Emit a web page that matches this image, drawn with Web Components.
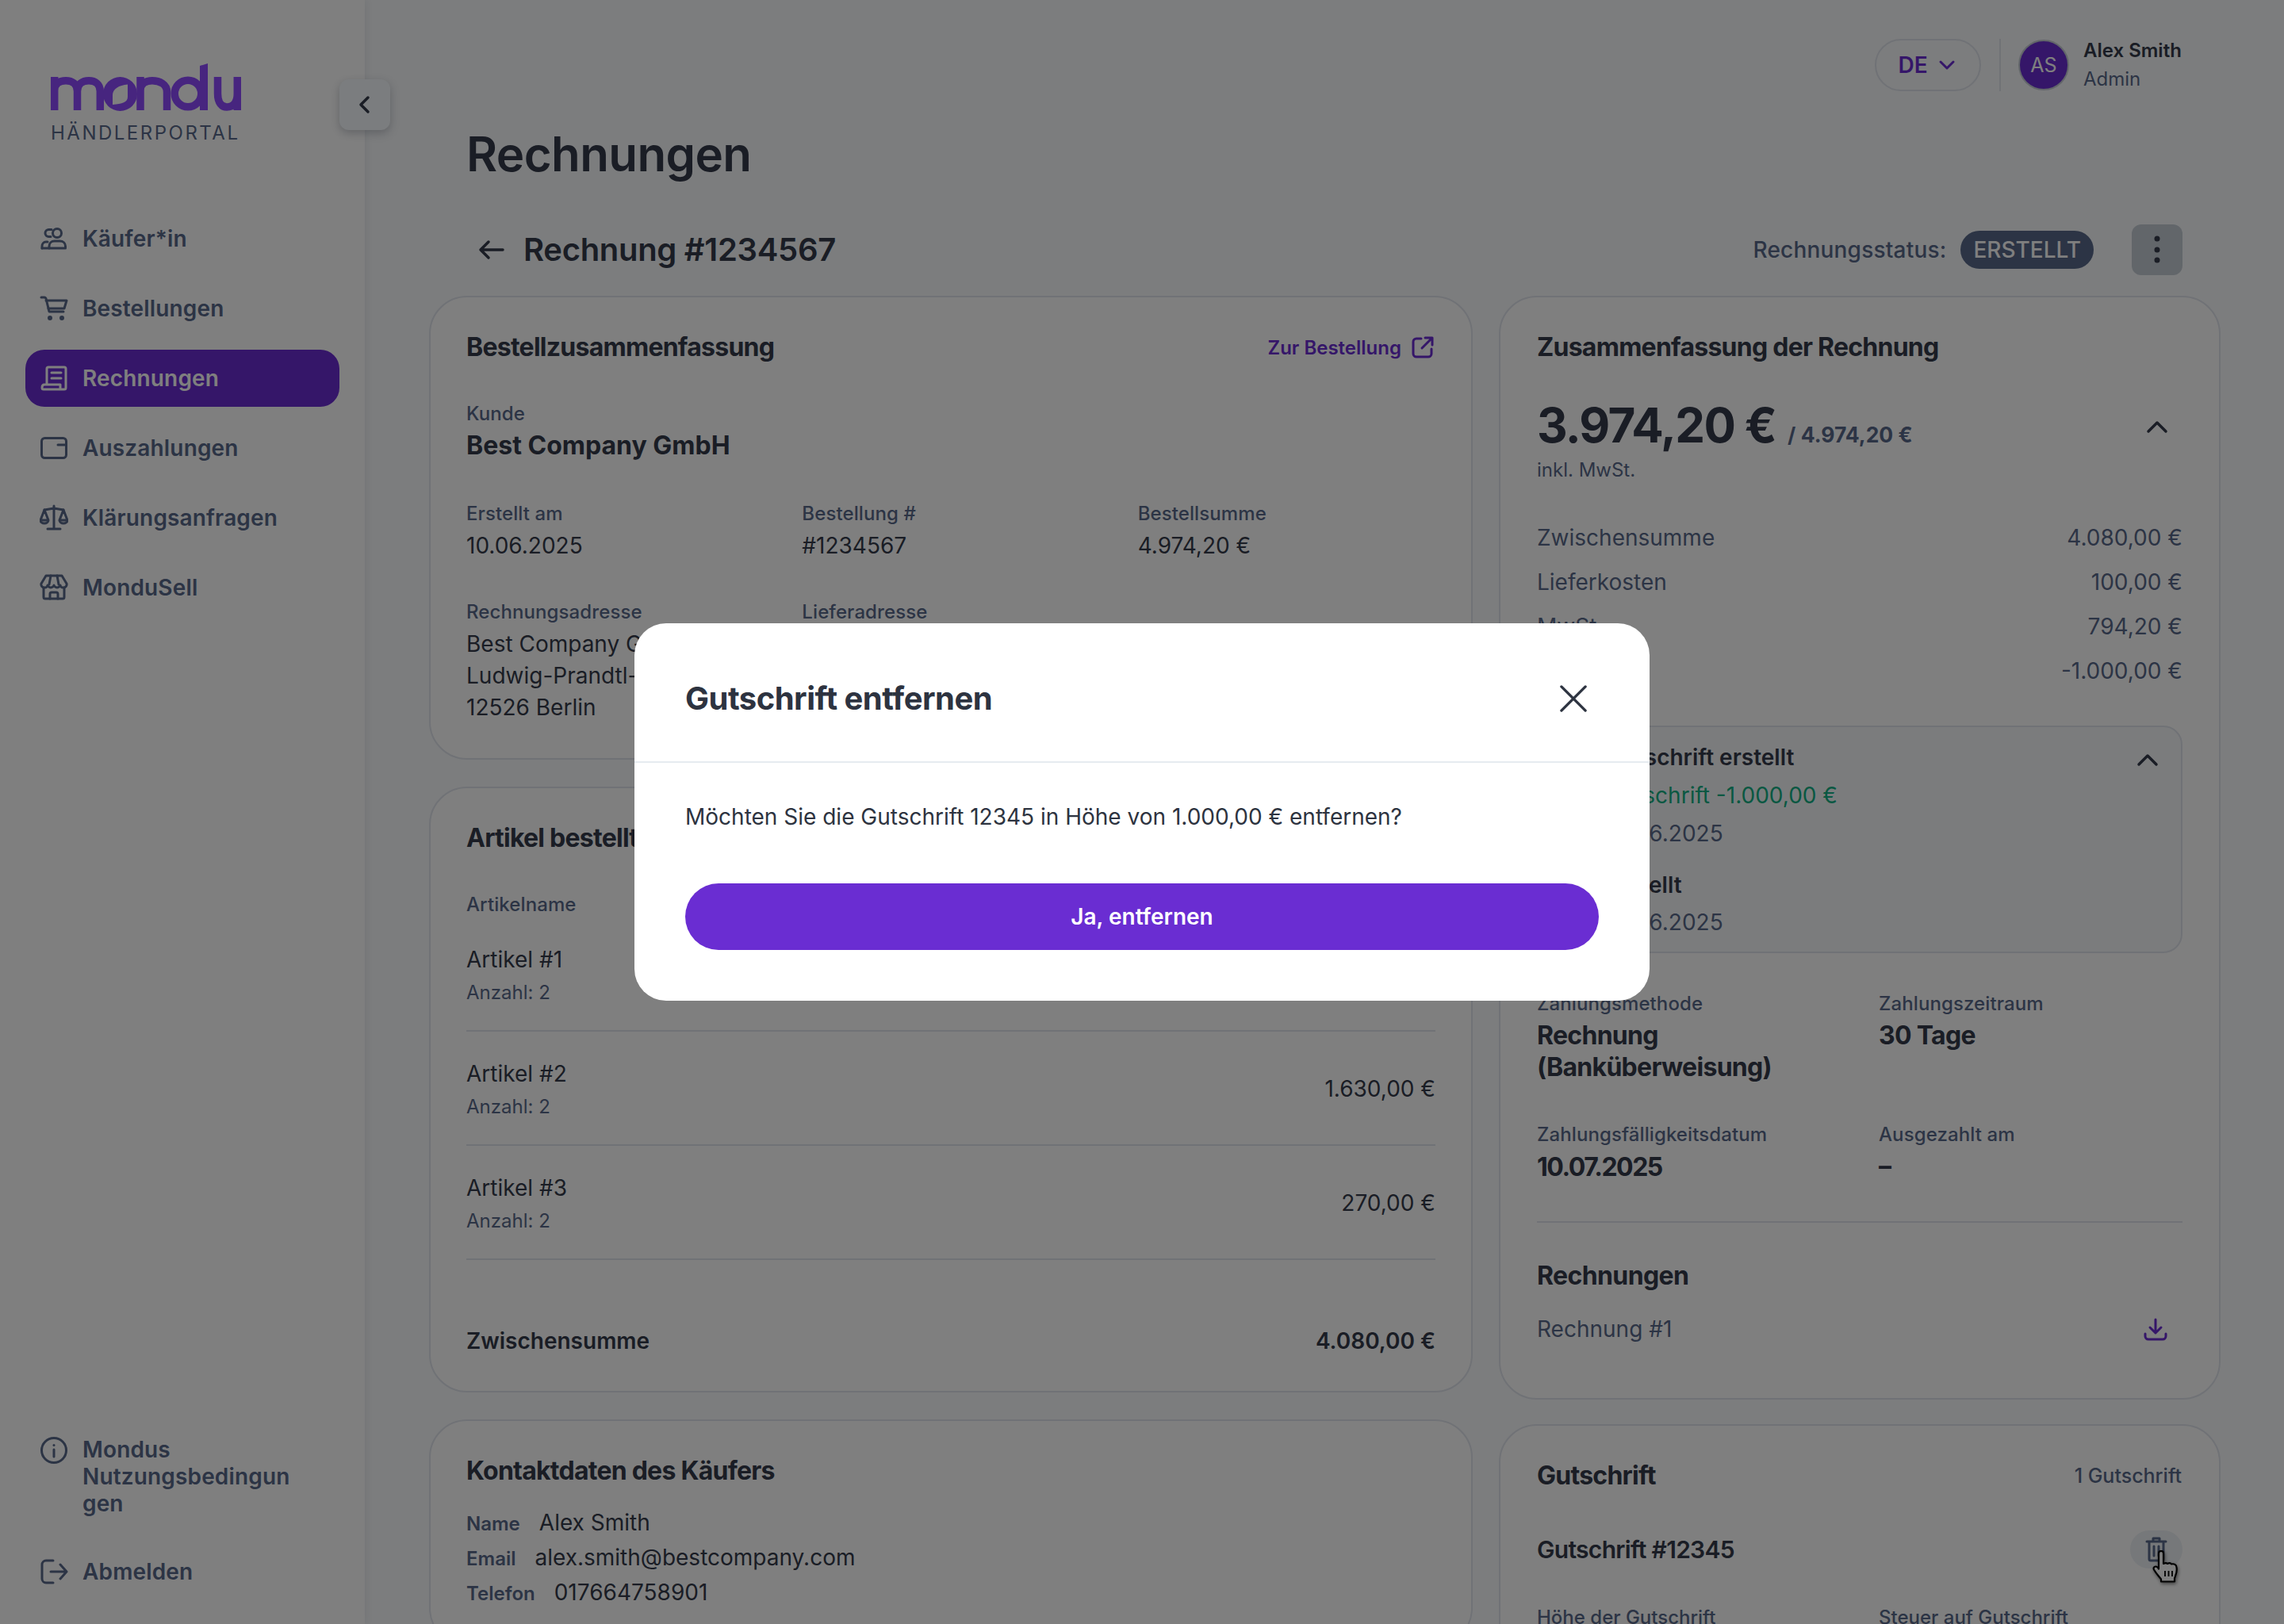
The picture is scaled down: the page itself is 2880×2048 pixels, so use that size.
<!DOCTYPE html>
<html lang="de">
<head>
<meta charset="utf-8">
<title>Rechnungen</title>
<style>
  html, body { margin: 0; height: 2048px; overflow: hidden; background: #f8fafc; }
  body { font-family: Inter, "Liberation Sans", sans-serif; color: #343a4a; }
</style>
</head>
<body>
<mondu-app>
  <mondu-sidebar slot="sidebar">
    <nav-item icon="users">Käufer*in</nav-item>
    <nav-item icon="cart">Bestellungen</nav-item>
    <nav-item icon="receipt" active>Rechnungen</nav-item>
    <nav-item icon="wallet">Auszahlungen</nav-item>
    <nav-item icon="scale">Klärungsanfragen</nav-item>
    <nav-item icon="store">MonduSell</nav-item>
    <nav-item slot="foot" icon="info" top>Mondus Nutzungsbedingungen</nav-item>
    <nav-item slot="foot" icon="logout">Abmelden</nav-item>
  </mondu-sidebar>

  <top-bar></top-bar>
  <page-head></page-head>

  <invoice-columns>
    <info-card slot="left" heading="Bestellzusammenfassung" style="--pad:45px;--card-bottom:44px">
      <a-link slot="side">Zur Bestellung</a-link>
      <data-grid cols="1"><data-field label="Kunde" value="Best Company GmbH" strong></data-field></data-grid>
      <data-grid cols="3" style="--top:50px">
        <data-field label="Erstellt am" value="10.06.2025"></data-field>
        <data-field label="Bestellung #" value="#1234567"></data-field>
        <data-field label="Bestellsumme" value="4.974,20 €"></data-field>
        <data-field label="Rechnungsadresse">Best Company GmbH<br>Ludwig-Prandtl-Str. 1<br>12526 Berlin</data-field>
        <data-field label="Lieferadresse"></data-field>
      </data-grid>
    </info-card>

    <info-card slot="left" heading="Artikel bestellt" style="--pad:45px;--card-bottom:43px">
      <items-table>
        <item-row name="Artikel #1" qty="Anzahl: 2" price="2.180,00 €"></item-row>
        <item-row name="Artikel #2" qty="Anzahl: 2" price="1.630,00 €"></item-row>
        <item-row name="Artikel #3" qty="Anzahl: 2" price="270,00 €"></item-row>
      </items-table>
    </info-card>

    <info-card slot="left" heading="Kontaktdaten des Käufers" style="--pad:45px">
      <contact-list></contact-list>
    </info-card>

    <info-card slot="right" heading="Zusammenfassung der Rechnung" style="--card-bottom:67px">
      <invoice-summary></invoice-summary>
    </info-card>

    <info-card slot="right" heading="Gutschrift">
      <span slot="side" style="font-size:25px;font-weight:500;color:#58698a;margin-right:1px">1 Gutschrift</span>
      <credit-note></credit-note>
    </info-card>
  </invoice-columns>

  <hand-cursor slot="overlay"></hand-cursor>
  <dialog-scrim slot="overlay"></dialog-scrim>
  <confirm-dialog slot="overlay" heading="Gutschrift entfernen" action="Ja, entfernen">
    Möchten Sie die Gutschrift 12345 in Höhe von 1.000,00 € entfernen?
  </confirm-dialog>
</mondu-app>

<script>
const ICONS = {
  users: '<circle cx="22" cy="11" r="5.500"/><path d="M12 30v-2.500c0-4 3-6.500 6.500-6.500h7c4 0 7 2.500 7 6.500V30z"/><path d="M15 6.500h-3.500a4.500 4.500 0 0 0 0 9H14"/><path d="M3 30v-2.500c0-3 2-5.500 5-5.500h2"/><path d="M3 30h9"/>',
  cart: '<path d="M2 4h4c1 0 1.500 .5 2 1.500L12 22h18"/><path d="M8 8h26l-3 10H11"/><circle cx="13" cy="30" r="1.500" fill="currentColor"/><circle cx="28" cy="30" r="1.500" fill="currentColor"/>',
  receipt: '<path d="M9 26V6a2 2 0 0 1 2-2h20a2 2 0 0 1 2 2v24a2 2 0 0 1-2 2H5a2 2 0 0 1-2-2c0-2 1-4 3-4h20v5"/><path d="M15 11h12M15 18h12"/>',
  wallet: '<rect x="2.500" y="5.500" width="31" height="25" rx="4"/><path d="M23 14h10"/>',
  scale: '<path d="M18 3v28M10 32h16M6 8l12-2 12 2"/><path d="M6 8L1 21h10zM30 8l-5 13h10zM1 21a5 4 0 0 0 10 0M25 21a5 4 0 0 0 10 0"/>',
  store: '<path d="M8 3h20l6 10a4 4 0 0 1-4 5c-3 0-4-2-4-3 0 1-2 3-4 3s-4-2-4-3c0 1-2 3-4 3s-4-2-4-3c0 1-1 3-4 3a4 4 0 0 1-4-5z"/><path d="M14 3l-2 11M22 3l2 11"/><path d="M5 18v12a2 2 0 0 0 2 2h22a2 2 0 0 0 2-2V18"/><path d="M13 32v-6a2 2 0 0 1 2-2h6a2 2 0 0 1 2 2v6"/>',
  info: '<circle cx="18" cy="18" r="15.500"/><path d="M18 17v9"/><circle cx="18" cy="11.500" r="1.500" fill="currentColor" stroke="none"/>',
  logout: '<path d="M17 4H8a5 5 0 0 0-5 5v18a5 5 0 0 0 5 5h9"/><path d="M14 18h20M26 9l8 9-8 9"/>'
};
const svg = (name, size = 36, sw = 3) =>
  `<svg width="${size}" height="${size}" viewBox="0 0 36 36" fill="none" stroke="currentColor" stroke-width="${sw}" stroke-linecap="round" stroke-linejoin="round">${ICONS[name]}</svg>`;

class Base extends HTMLElement {
  constructor() {
    super();
    this.attachShadow({ mode: 'open' });
  }
  connectedCallback() {
    this.shadowRoot.innerHTML = `<style>${this.styles}</style>${this.markup}`;
  }
  attr(n) { return this.getAttribute(n) || ''; }
}

customElements.define('mondu-app', class extends Base {
  get styles() { return `
    :host { display: flex; width: 2880px; height: 2048px; overflow: hidden; position: relative; }
    .main { flex: 1; min-width: 0; padding: 48px 80px 0 81px; box-sizing: border-box; }
  `; }
  get markup() { return `
    <slot name="sidebar"></slot>
    <div class="main"><slot></slot></div>
    <slot name="overlay"></slot>
  `; }
});

customElements.define('mondu-sidebar', class extends Base {
  get styles() { return `
    :host { display: flex; flex-direction: column; flex: none; width: 460px; height: 2048px; box-sizing: border-box;
      background: #fff; box-shadow: 0 0 10px rgba(30,40,60,.10); padding: 80px 32px 0; position: relative; }
    .logo { display: block; margin: 0 0 0 32px; }
    .portal { margin: 13px 0 0 32px; font-size: 24px; line-height: 30px; letter-spacing: 2.500px; color: #58698a; font-weight: 400; }
    .nav { display: flex; flex-direction: column; gap: 16px; margin-top: 82px; }
    .foot { display: flex; flex-direction: column; gap: 33px; margin-top: auto; padding-bottom: 30px; }
    .toggle { position: absolute; left: 428px; top: 100px; width: 64px; height: 64px; border-radius: 12px; background: #f6fbfe;
      box-shadow: 0 4px 12px rgba(30,40,60,.25); display: flex; align-items: center; justify-content: center; color: #343a4a; }
  `; }
  get markup() { return `
    <svg class="logo" width="240" height="60" viewBox="0 0 240 60" fill="none" stroke="#8e4bff" stroke-width="9.500" role="img" aria-label="mondu">
      <path d="M4.700 17V59M4.700 34C4.700 25 11 21.800 19 21.800C27 21.800 33.500 26 33.500 35V59M33.500 35C33.500 26 40 21.800 48 21.800C56 21.800 62.300 26 62.300 35V59"/>
      <path fill="#8e4bff" stroke="none" fill-rule="evenodd" d="M87.500 17a21.500 21.500 0 1 1 0 43a21.500 21.500 0 1 1 0-43ZM78 52V40C78 32 86 27.500 97 26.500V42C97 49 90 51 78 52Z"/>
      <path d="M113 17V59M113 34C113 25 120 21.800 128 21.800C137 21.800 146.500 26 146.500 36V59"/>
      <circle cx="173" cy="38" r="16.800"/>
      <path fill="#8e4bff" stroke="none" d="M188 3L198 0V59H188Z"/>
      <path d="M210.500 17V38C210.500 50 216 55 222 55C230 55 235.300 50 235.300 38M235.300 17V59"/>
    </svg>
    <div class="portal">HÄNDLERPORTAL</div>
    <div class="nav"><slot></slot></div>
    <div class="foot"><slot name="foot"></slot></div>
    <div class="toggle"><svg width="28" height="28" viewBox="0 0 28 28" fill="none" stroke="currentColor" stroke-width="3.500" stroke-linecap="round" stroke-linejoin="round"><path d="M18 5l-9 9 9 9"/></svg></div>
  `; }
});

customElements.define('nav-item', class extends Base {
  get styles() { return `
    :host { display: flex; align-items: center; gap: 18px; min-height: 72px; box-sizing: border-box; padding: 0 0 0 18px;
      border-radius: 24px; color: #58698a; font-size: 28px; font-weight: 600; line-height: 34px; letter-spacing: .15px; }
    :host([active]) { background: #6a2dd2; color: #fff; }
    :host([top]) { align-items: flex-start; }
    svg { flex: none; }
    .t { width: 270px; overflow-wrap: anywhere; }
  `; }
  get markup() { return `${svg(this.attr('icon'))}<div class="t"><slot></slot></div>`; }
});

customElements.define('top-bar', class extends Base {
  get styles() { return `
    :host { display: flex; align-items: center; justify-content: flex-end; height: 68px; padding-right: 47px; }
    .lang { display: flex; align-items: center; justify-content: center; gap: 12px; width: 134px; height: 66px; box-sizing: border-box; padding-right: 2px;
      border: 2px solid #e0e4ec; border-radius: 33px; color: #6a2dd2; font-weight: 600; font-size: 28px; }
    .sep { width: 2px; height: 66px; background: #e0e4ec; margin: 0 22px 0 23px; }
    .av { width: 64px; height: 64px; box-sizing: border-box; border: 2px solid #c4ccd4; border-radius: 50%; background: #6a2dd2; color: #fff;
      display: flex; align-items: center; justify-content: center; font-size: 25px; font-weight: 400; margin-right: 18px; }
    .who { width: 126px; line-height: 36px; white-space: nowrap; }
    .n { font-size: 24px; font-weight: 600; color: #343a4a; }
    .r { font-size: 24px; color: #58698a; }
  `; }
  get markup() { return `
    <div class="lang">DE <svg width="24" height="24" viewBox="0 0 24 24" fill="none" stroke="currentColor" stroke-width="3" stroke-linecap="round" stroke-linejoin="round"><path d="M4 8l8 8 8-8"/></svg></div>
    <div class="sep"></div>
    <div class="av">AS</div>
    <div class="who"><div class="n">Alex Smith</div><div class="r">Admin</div></div>
  `; }
});

customElements.define('page-head', class extends Base {
  get styles() { return `
    :host { display: block; padding: 0 48px 0 47px; }
    h1 { margin: 40px 0 0; font-size: 60px; line-height: 76px; font-weight: 600; color: #343a4a; letter-spacing: -.6px; }
    .row { display: flex; align-items: center; height: 64px; margin-top: 51px; }
    .back { display: flex; margin: 0 22px 0 14px; color: #343a4a; }
    h2 { margin: 0; font-size: 40px; line-height: 64px; font-weight: 600; color: #343a4a; flex: 1; letter-spacing: -.3px; }
    .st { font-size: 28px; font-weight: 500; color: #58698a; letter-spacing: .2px; }
    .badge { margin: 0 48px 0 18px; height: 48px; border-radius: 24px; background: #58698a; color: #fff; font-size: 28px; font-weight: 500;
      line-height: 48px; padding: 0 16px; }
    .more { width: 64px; height: 64px; border-radius: 12px; background: #c4ccd4; display: flex; align-items: center; justify-content: center; color: #343a4a; }
  `; }
  get markup() { return `
    <h1>Rechnungen</h1>
    <div class="row">
      <span class="back"><svg width="36" height="36" viewBox="0 0 36 36" fill="none" stroke="currentColor" stroke-width="3.500" stroke-linecap="round" stroke-linejoin="round"><path d="M32 18H4M14 8L4 18l10 10"/></svg></span>
      <h2>Rechnung #1234567</h2>
      <span class="st">Rechnungsstatus:</span>
      <span class="badge">ERSTELLT</span>
      <span class="more"><svg width="10" height="40" viewBox="0 0 10 40" fill="currentColor"><circle cx="5" cy="6" r="3.500"/><circle cx="5" cy="20" r="3.500"/><circle cx="5" cy="33" r="3.500"/></svg></span>
    </div>
  `; }
});

customElements.define('invoice-columns', class extends Base {
  get styles() { return `
    :host { display: grid; grid-template-columns: 1316px 910px; column-gap: 33px; margin-top: 26px; }
    .col { display: flex; flex-direction: column; gap: 34px; }
    .col.r { gap: 31px; }
  `; }
  get markup() { return `<div class="col"><slot name="left"></slot></div><div class="col r"><slot name="right"></slot></div>`; }
});

customElements.define('info-card', class extends Base {
  get styles() { return `
    :host { display: block; box-sizing: border-box; background: #fff; border: 2px solid #e0e4ec; border-radius: 48px;
      padding: 43px var(--pad, 46px) var(--card-bottom, 44px); }
    .head { display: flex; align-items: center; justify-content: space-between; height: 40px; }
    h3 { margin: 0; font-size: 32px; line-height: 40px; font-weight: 650; color: #343a4a; letter-spacing: -.75px; }
  `; }
  get markup() { return `<div class="head"><h3>${this.attr('heading')}</h3><slot name="side"></slot></div><slot></slot>`; }
});

customElements.define('a-link', class extends Base {
  get styles() { return `
    :host { display: flex; align-items: center; gap: 12px; color: #6a2dd2; font-size: 24px; font-weight: 600; margin-right: 1px; }
  `; }
  get markup() { return `<slot></slot><svg width="30" height="30" viewBox="0 0 30 30" fill="none" stroke="currentColor" stroke-width="3" stroke-linecap="round" stroke-linejoin="round"><path d="M13 4H7a4 4 0 0 0-4 4v15a4 4 0 0 0 4 4h15a4 4 0 0 0 4-4v-6"/><path d="M14 16L27 3M18 3h9v9"/></svg>`; }
});

customElements.define('data-grid', class extends Base {
  get styles() { return `
    :host { display: grid; grid-template-columns: repeat(${this.attr('cols') || 1}, 1fr); gap: 48px; margin-top: var(--top, 48px); }
  `; }
  get markup() { return `<slot></slot>`; }
});

customElements.define('data-field', class extends Base {
  get styles() { return `
    :host { display: block; }
    .l { font-size: 24px; line-height: 32px; font-weight: 500; color: #58698a; letter-spacing: .1px; }
    .v { margin-top: 4px; font-size: 28px; line-height: 40px; color: #343a4a; white-space: nowrap; }
    :host([strong]) .v { font-size: 32px; font-weight: 650; letter-spacing: 0; }
  `; }
  get markup() { return `<div class="l">${this.attr('label')}</div><div class="v">${this.attr('value')}<slot></slot></div>`; }
});

customElements.define('items-table', class extends Base {
  get styles() { return `
    :host { display: block; margin-top: 48px; }
    .h { display: flex; justify-content: space-between; font-size: 24px; line-height: 32px; font-weight: 500; color: #58698a; letter-spacing: .1px; }
    .sum { display: flex; justify-content: space-between; margin-top: 82px; font-size: 28px; line-height: 40px; font-weight: 600; color: #343a4a; }
  `; }
  get markup() { return `<div class="h"><span>Artikelname</span><span>Preis</span></div><slot></slot>
    <div class="sum"><span>Zwischensumme</span><span>4.080,00 €</span></div>`; }
});

customElements.define('item-row', class extends Base {
  get styles() { return `
    :host { display: flex; align-items: center; justify-content: space-between; box-sizing: border-box; height: 144px; padding-top: 1px;
      border-bottom: 2px solid #e0e4ec; font-size: 28px; }
    .n { line-height: 40px; color: #343a4a; }
    .q { margin-top: 6px; font-size: 24px; line-height: 32px; color: #58698a; }
    .p { color: #343a4a; }
  `; }
  get markup() { return `<div><div class="n">${this.attr('name')}</div><div class="q">${this.attr('qty')}</div></div><div class="p">${this.attr('price')}</div>`; }
});

customElements.define('contact-list', class extends Base {
  get styles() { return `
    :host { display: block; margin-top: 23px; }
    div { display: flex; align-items: baseline; gap: 24px; height: 44px; line-height: 44px; font-size: 28px; color: #343a4a; }
    b { font-size: 24px; font-weight: 600; color: #58698a; }
  `; }
  get markup() { return `
    <div><b>Name</b> Alex Smith</div>
    <div><b>Email</b> alex.smith@bestcompany.com</div>
    <div><b>Telefon</b> 017664758901</div>
  `; }
});

customElements.define('invoice-summary', class extends Base {
  get styles() { return `
    :host { display: block; }
    .total { display: flex; align-items: baseline; margin-top: 38px; height: 80px; line-height: 80px; position: relative; }
    .big { font-size: 60px; font-weight: 700; color: #343a4a; letter-spacing: -1.700px; }
    .of { font-size: 26.500px; font-weight: 700; color: #58698a; margin-left: 15px; }
    .toggle { position: absolute; right: 16px; top: 13px; color: #343a4a; }
    .tax { font-size: 24px; line-height: 32px; color: #58698a; margin-top: 1px; }
    .rows { display: flex; flex-direction: column; gap: 16px; margin-top: 49px; }
    .r { display: flex; justify-content: space-between; font-size: 28px; line-height: 40px; color: #58698a; }
    .box { margin-top: 49px; height: 287px; box-sizing: border-box; padding: 18px 30px 18px 86px; background: #f7f9fb; border: 2px solid #e0e4ec; border-radius: 24px; position: relative; }
    .box .t { font-size: 28px; line-height: 40px; font-weight: 600; color: #343a4a; }
    .box .g { font-size: 28px; line-height: 40px; margin-top: 8px; color: #12b084; }
    .box .d { font-size: 28px; line-height: 40px; margin-top: 8px; color: #58698a; }
    .box .t2 { margin-top: 25px; }
    .box .d2 { margin-top: 7px; }
    .box svg { position: absolute; right: 26px; top: 26px; color: #343a4a; }
    .grid { display: grid; grid-template-columns: 1fr 1fr; column-gap: 48px; row-gap: 49px; margin-top: 48px; }
    .l { font-size: 24px; line-height: 32px; font-weight: 500; color: #58698a; letter-spacing: .1px; }
    .v { margin-top: 4px; font-size: 32px; line-height: 40px; font-weight: 650; color: #343a4a; letter-spacing: -.7px; }
    .v.num { letter-spacing: -1.500px; margin-top: 5px; }
    hr { border: 0; height: 2px; background: #e0e4ec; margin: 48px 0 0; }
    h4 { margin: 47px 0 0; font-size: 32px; line-height: 40px; font-weight: 650; color: #343a4a; letter-spacing: -.6px; }
    .dl { display: flex; justify-content: space-between; align-items: center; margin-top: 27px; font-size: 28px; line-height: 40px; color: #58698a; }
    .dl svg { color: #6a2dd2; margin-right: 18px; }
  `; }
  get markup() {
    const up = '<svg width="32" height="32" viewBox="0 0 32 32" fill="none" stroke="currentColor" stroke-width="3.500" stroke-linecap="round" stroke-linejoin="round"><path d="M5 21L16 10l11 11"/></svg>';
    return `
    <div class="total"><span class="big">3.974,20 €</span><span class="of">/ 4.974,20 €</span><span class="toggle">${up}</span></div>
    <div class="tax">inkl. MwSt.</div>
    <div class="rows">
      <div class="r"><span>Zwischensumme</span><span>4.080,00 €</span></div>
      <div class="r"><span>Lieferkosten</span><span>100,00 €</span></div>
      <div class="r"><span>MwSt.</span><span>794,20 €</span></div>
      <div class="r"><span>Gutschrift</span><span>-1.000,00 €</span></div>
    </div>
    <div class="box">
      ${up}
      <div class="t">Gutschrift erstellt</div>
      <div class="g">Gutschrift -1.000,00 €</div>
      <div class="d">10.06.2025</div>
      <div class="t t2">Erstellt</div>
      <div class="d d2">10.06.2025</div>
    </div>
    <div class="grid">
      <div><div class="l">Zahlungsmethode</div><div class="v">Rechnung<br>(Banküberweisung)</div></div>
      <div><div class="l">Zahlungszeitraum</div><div class="v">30 Tage</div></div>
      <div><div class="l">Zahlungsfälligkeitsdatum</div><div class="v num">10.07.2025</div></div>
      <div><div class="l">Ausgezahlt am</div><div class="v">–</div></div>
    </div>
    <hr>
    <h4>Rechnungen</h4>
    <div class="dl"><span>Rechnung #1</span><svg width="32" height="32" viewBox="0 0 32 32" fill="none" stroke="currentColor" stroke-width="3" stroke-linecap="round" stroke-linejoin="round"><path d="M16 4v17M9 14l7 7 7-7"/><path d="M3 22v3a4 4 0 0 0 4 4h18a4 4 0 0 0 4-4v-3"/></svg></div>
  `; }
});

customElements.define('credit-note', class extends Base {
  get styles() { return `
    :host { display: block; margin-top: 53px; }
    .r { display: flex; align-items: center; justify-content: space-between; height: 40px; }
    .t { font-size: 30px; font-weight: 600; color: #343a4a; letter-spacing: -.7px; }
    .del { width: 66px; height: 48px; border-radius: 24px; background: #ecf0f4; display: flex; align-items: center; justify-content: center; color: #58698a; }
    .g { display: grid; grid-template-columns: 1fr 1fr; column-gap: 48px; margin-top: 50px; font-size: 24px; line-height: 32px; font-weight: 500; color: #58698a; }
  `; }
  get markup() { return `
    <div class="r"><span class="t">Gutschrift #12345</span>
      <span class="del"><svg width="28" height="32" viewBox="0 0 28 32" fill="none" stroke="currentColor" stroke-width="3" stroke-linecap="round" stroke-linejoin="round"><path d="M2 6h24M10 5V2h8v3M5 6v22a2 2 0 0 0 2 2h14a2 2 0 0 0 2-2V6M11 12v12M17 12v12"/></svg></span>
    </div>
    <div class="g"><span>Höhe der Gutschrift</span><span>Steuer auf Gutschrift</span></div>
  `; }
});

customElements.define('hand-cursor', class extends Base {
  get styles() { return `
    :host { position: absolute; left: 2712px; top: 1955px; width: 38px; height: 42px; display: block;
      filter: drop-shadow(1px 2px 2px rgba(0,0,0,.5)); }
    svg { display: block; }
  `; }
  get markup() { return `<svg width="38" height="42" viewBox="0 0 38 42"><path d="M10 4a3 3 0 0 1 6 0v13c2-1 4-1 5 0 2-1 4-1 5 .5 2-.5 5 0 6 2 1 3 1 8-1 13l-1 3v4H13v-3c-3-4-6-7-9-12-1-2 0-4 2-4 2 0 3 1 4 3z" fill="#fff" stroke="#000" stroke-width="2.200" stroke-linejoin="round"/><path d="M18 26v7M22.500 26v7M27 26v7" stroke="#000" stroke-width="1.800"/></svg>`; }
});

customElements.define('dialog-scrim', class extends Base {
  get styles() { return `:host { position: absolute; inset: 0; display: block; background: rgba(0,0,0,.5); }`; }
  get markup() { return ``; }
});

customElements.define('confirm-dialog', class extends Base {
  get styles() { return `
    :host { position: absolute; left: 800px; top: 786px; width: 1280px; height: 476px; box-sizing: border-box; display: block;
      background: #fff; border-radius: 40px; overflow: hidden; }
    header { display: flex; align-items: center; justify-content: space-between; height: 160px; padding: 14px 64px 0; border-bottom: 2px solid #e6ebf0; box-sizing: content-box; }
    h2 { margin: 0; font-size: 40px; font-weight: 650; color: #2d3340; letter-spacing: -.5px; }
    svg { color: #2d3340; margin: 2px 15px 0 0; }
    .body { padding: 48px 64px 0; font-size: 28px; line-height: 40px; color: #2d3340; }
    button { display: block; width: 1152px; height: 84px; margin: 64px 64px 0; border: 0; border-radius: 42px; background: #6a2dd2; color: #fff;
      font: 600 28px Inter, "Liberation Sans", sans-serif; }
  `; }
  get markup() { return `
    <header><h2>${this.attr('heading')}</h2>
      <svg width="34" height="34" viewBox="0 0 36 36" fill="none" stroke="currentColor" stroke-width="3.500" stroke-linecap="round"><path d="M2 2l32 32M34 2L2 34"/></svg>
    </header>
    <div class="body"><slot></slot></div>
    <button>${this.attr('action')}</button>
  `; }
});
</script>
</body>
</html>
